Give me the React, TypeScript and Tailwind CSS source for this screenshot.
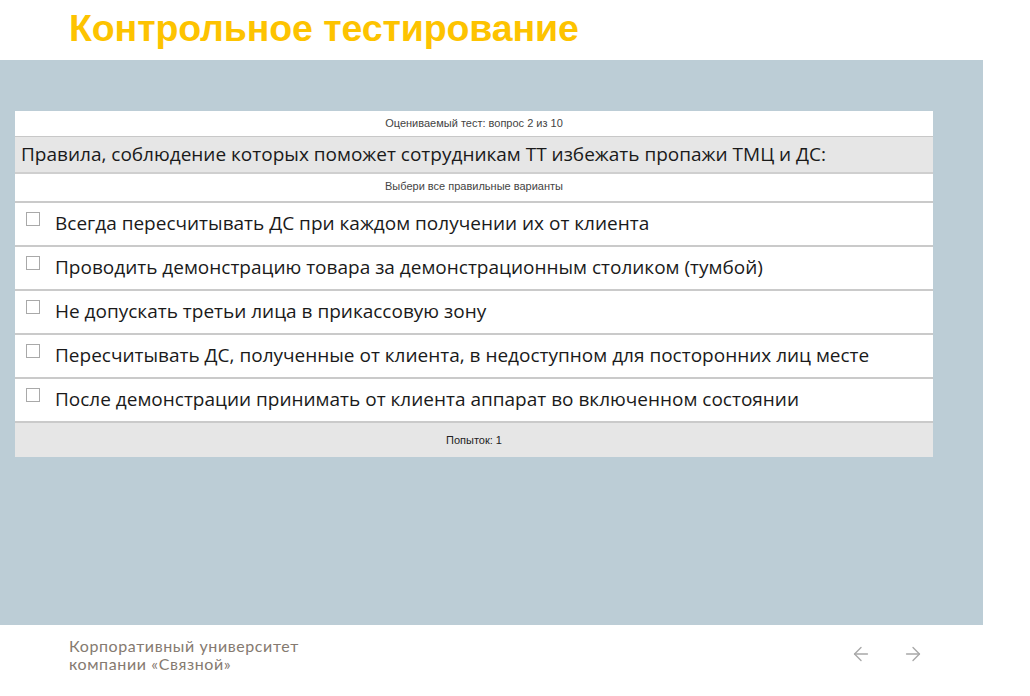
import { ArrowLeft, ArrowRight } from 'lucide-react';

const OPTIONS = [
  'Всегда пересчитывать ДС при каждом получении их от клиента',
  'Проводить демонстрацию товара за демонстрационным столиком (тумбой)',
  'Не допускать третьи лица в прикассовую зону',
  'Пересчитывать ДС, полученные от клиента, в недоступном для посторонних лиц месте',
  'После демонстрации принимать от клиента аппарат во включенном состоянии',
];

function OptionRow({ text }: { text: string }) {
  return (
    <div className="mt-[2px] border-t-2 border-[#cacaca]">
      <label className="flex h-[40px] items-start bg-white pl-[11px] pt-[7px]">
        <span className="mt-[2px] h-[14px] w-[14px] shrink-0 border border-[#a9a9a9] bg-white" />
        <span className="ml-[15px] text-[19px] leading-[26px] text-[#1a1a1a] [font-family:'Open_Sans',sans-serif]">
          {text}
        </span>
      </label>
    </div>
  );
}

export default function App() {
  return (
    <div className="flex h-[696px] w-[1030px] flex-col bg-white [font-family:'Liberation_Sans',Arial,sans-serif]">
      {/* Title */}
      <div className="flex h-[60px] items-start pl-[69px] pt-[10px]">
        <h1 className="text-[37.5px] font-bold leading-none tracking-[-0.1px] text-[#fdc300]">
          Контрольное тестирование
        </h1>
      </div>

      {/* Slide area */}
      <div className="h-[565px] w-[983px] bg-[#bccdd6] pl-[15px] pt-[51px]">
        <div className="w-[918px] bg-white">
          <div className="flex h-[26px] items-center justify-center border-b border-[#c8c8c8] text-[11px] text-[#444]">
            Оцениваемый тест: вопрос 2 из 10
          </div>
          <div className="flex h-[37px] items-center border-b-2 border-[#cfcfcf] bg-[#e6e6e6] pl-[6px] text-[19px] text-[#1a1a1a] [font-family:'Open_Sans',sans-serif]">
            Правила, соблюдение которых поможет сотрудникам ТТ избежать пропажи ТМЦ и ДС:
          </div>
          <div className="flex h-[25px] items-center justify-center text-[11px] text-[#444]">
            Выбери все правильные варианты
          </div>
          {OPTIONS.map(o => (
            <OptionRow key={o} text={o} />
          ))}
          <div className="mt-[2px] flex h-[36px] items-center justify-center border-t-2 border-[#cacaca] bg-[#e6e6e6] text-[11px] text-[#222]">
            Попыток: 1
          </div>
        </div>
      </div>

      {/* Footer */}
      <div className="flex flex-1 items-start justify-between pl-[69px] pr-[106px] pt-[12px]">
        <p className="text-[16px] leading-[18px] tracking-[0.6px] text-[#857a70] [font-family:Lato,sans-serif]">
          Корпоративный университет
          <br />
          компании «Связной»
        </p>
        <div className="mt-[6px] flex gap-[30px] text-[#a8a8a8]">
          <ArrowLeft size={22} strokeWidth={1.5} />
          <ArrowRight size={22} strokeWidth={1.5} />
        </div>
      </div>
    </div>
  );
}
